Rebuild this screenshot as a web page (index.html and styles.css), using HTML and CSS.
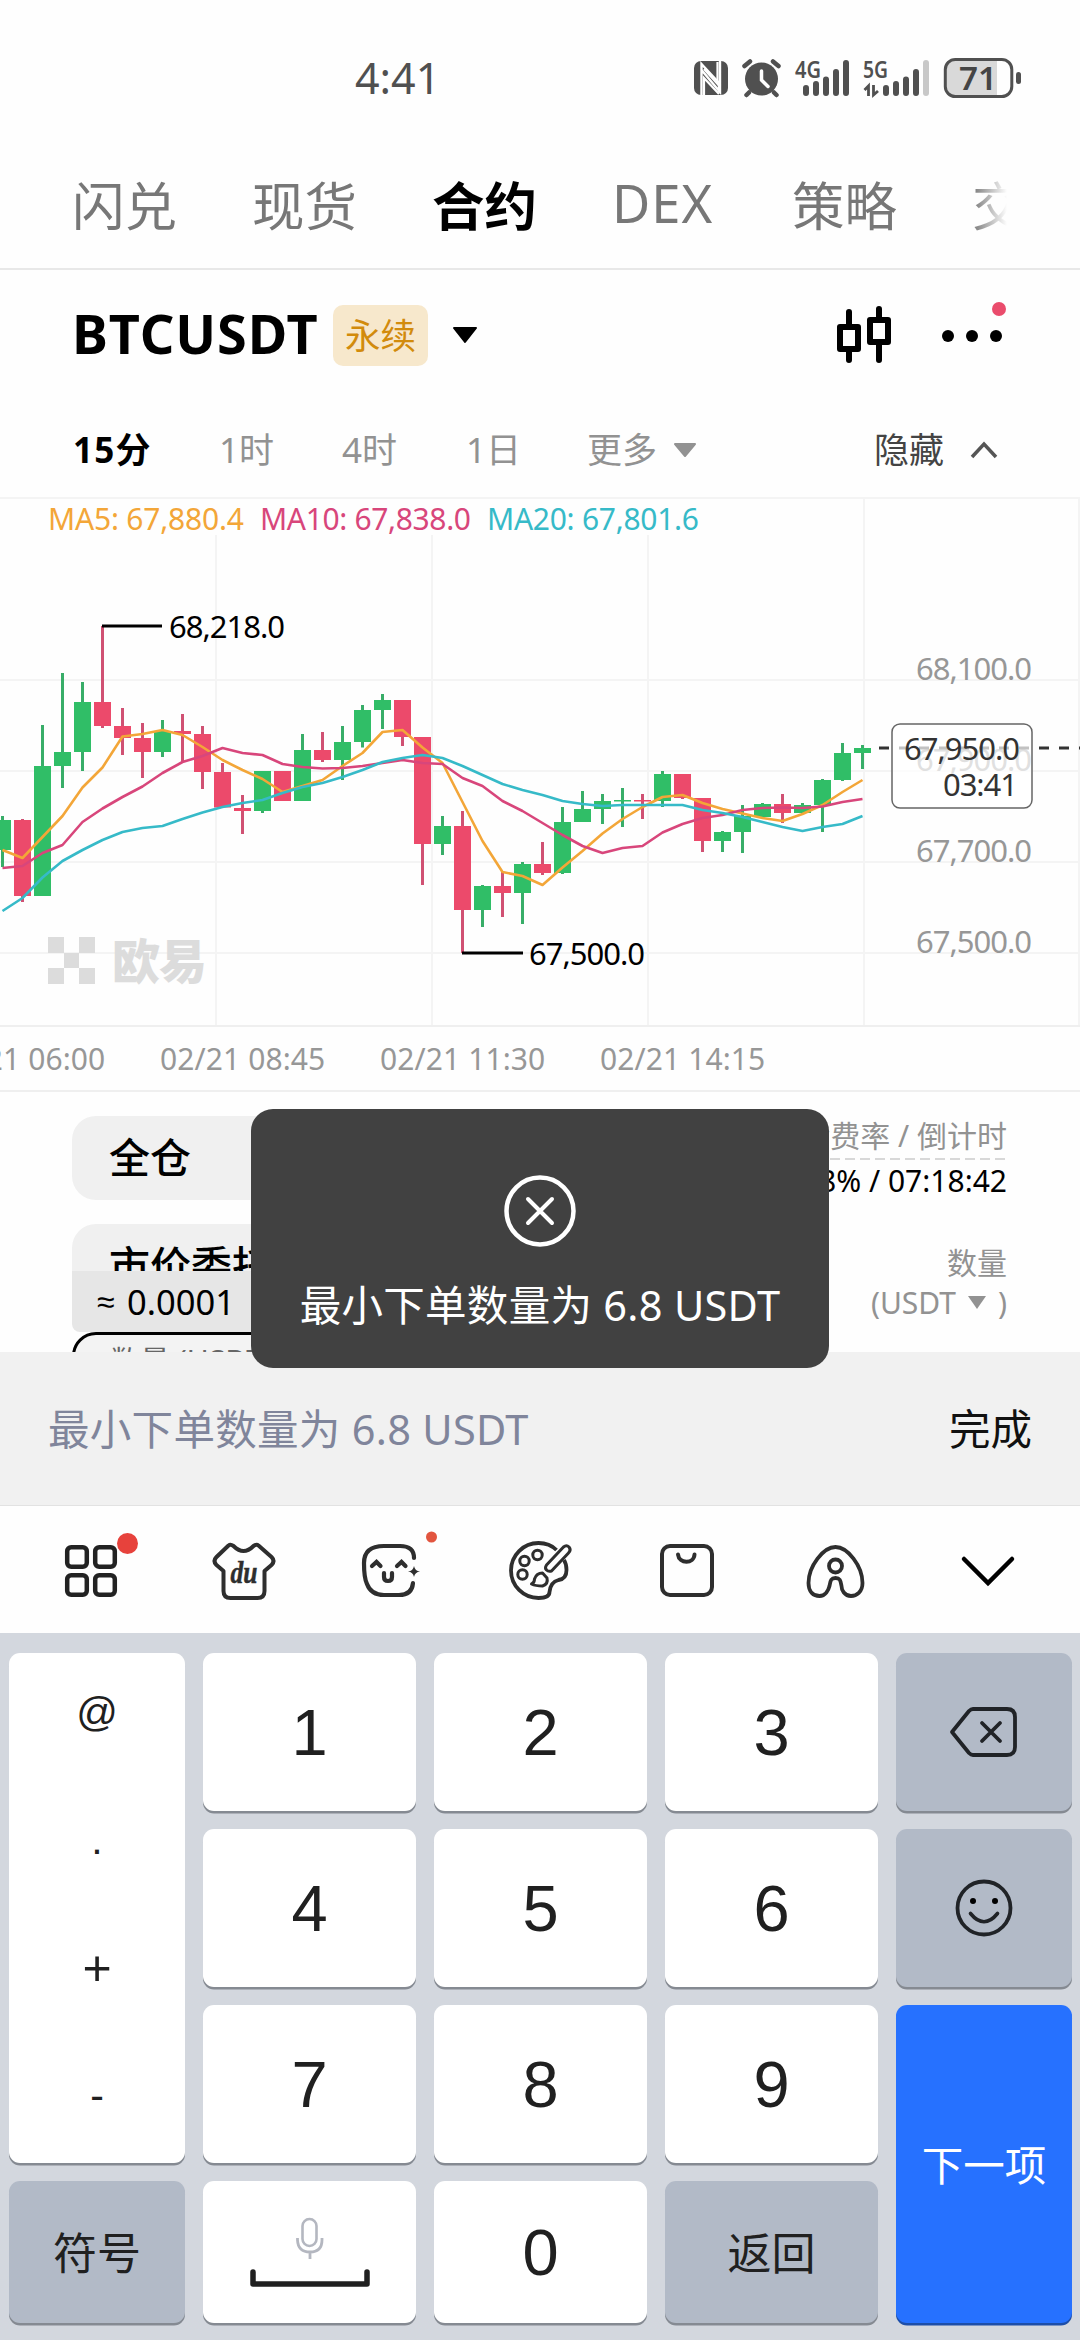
FILE: index.html
```html
<!DOCTYPE html>
<html lang="zh-CN">
<head>
<meta charset="utf-8">
<title>BTCUSDT 永续</title>
<link rel="stylesheet" href="styles.css">
</head>
<body>
<div class="screen">
  <header class="status">
    <span class="clock">4:41</span>
    <svg class="status-icons" viewBox="690 50 340 56" width="340" height="56">
      <rect x="694" y="61" width="34" height="34" rx="7" fill="#505050"/>
      <path d="M701.500 95V64L719 83V92M720 61V92M701.500 70L720 92V61" fill="none" stroke="#fff" stroke-width="2.400"/>
      <path d="M704 69L717.500 84V62M719 94L704 78V95" fill="none" stroke="#fff" stroke-width="2.200"/>
      <circle cx="761.500" cy="79" r="16.500" fill="#505050"/>
      <path d="M744.500 66L750 61.500M778.500 66L773 61.500M749 92.500L746.500 95M774 92.500L776.500 95" stroke="#505050" stroke-width="4.500" stroke-linecap="round"/>
      <path d="M761.500 71V80L768 86.500" fill="none" stroke="#fff" stroke-width="3.500" stroke-linecap="round"/>
      <text class="net" x="795" y="78" textLength="26" lengthAdjust="spacingAndGlyphs">4G</text>
      <path d="M806 88V93M816 84V93M826 79.500V93M836 72V93M846 63V93" stroke="#505050" stroke-width="6" stroke-linecap="round"/>
      <text class="net" x="863" y="78" textLength="25" lengthAdjust="spacingAndGlyphs">5G</text>
      <path d="M864.500 90L868.500 86V96M873.500 85V95L878 91" fill="none" stroke="#505050" stroke-width="2.800"/>
      <path d="M886 88V93M896 84V93M906 79.500V93M916 72V93" stroke="#505050" stroke-width="6" stroke-linecap="round"/>
      <path d="M926 63V93" stroke="#c8c8c8" stroke-width="6" stroke-linecap="round"/>
      <path d="M956 60H997V96H956A10 10 0 0 1 946 86V70A10 10 0 0 1 956 60Z" fill="#d9d9d9"/>
      <rect x="945.300" y="59.500" width="66.500" height="37" rx="10" fill="none" stroke="#505050" stroke-width="3"/>
      <rect x="1016" y="72" width="5" height="12" rx="2.500" fill="#505050"/>
      <text class="pct" x="959" y="90" textLength="38" lengthAdjust="spacingAndGlyphs">71</text>
    </svg>
  </header>

  <nav class="tabs">
    <span>闪兑</span><span>现货</span><span class="on">合约</span><span class="lat">DEX</span><span>策略</span><span class="fade">交</span>
  </nav>

  <section class="pair">
    <h1>BTCUSDT</h1>
    <span class="badge">永续</span>
    <svg class="drop" viewBox="0 0 26 16" width="26" height="16"><path d="M2 1H24L13 15Z" stroke="#000" stroke-width="2" stroke-linejoin="round"/></svg>
    <svg class="tools" viewBox="834 300 174 70" width="174" height="70">
      <path d="M849 312V324M849 352V360M879 309V318M879 344V360" stroke="#000" stroke-width="6" stroke-linecap="round"/>
      <path d="M840 327H858V349H840ZM870 320H888V342H870Z" fill="none" stroke="#000" stroke-width="6" stroke-linejoin="round"/>
      <circle cx="948" cy="336" r="6"/><circle cx="972" cy="336" r="6"/><circle cx="996" cy="336" r="6"/>
      <circle cx="999" cy="309" r="7" fill="#ea4c6c"/>
    </svg>
  </section>

  <section class="periods">
    <span class="p1">15分</span><span class="p2">1时</span><span class="p3">4时</span><span class="p4">1日</span><span class="p5">更多</span>
    <svg viewBox="0 0 24 16" width="24" height="16"><path d="M2 2H22L12 14Z" fill="#929292" stroke="#929292" stroke-width="2" stroke-linejoin="round"/></svg>
    <span class="hide">隐藏</span>
    <svg viewBox="0 0 28 20" width="28" height="20"><path d="M2 17L14 4L26 17" fill="none" stroke="#555" stroke-width="3.500"/></svg>
  </section>

  <svg class="chart" id="chart" viewBox="0 490 1080 535" width="1080" height="535">
    <path d="M0 498H1080M0 680H1080M0 771H1080M0 862H1080M0 953H1080" stroke="#f4f4f4" stroke-width="2"/>
    <path d="M216 535V1025M432 535V1025M648 535V1025M864 498V1025M1079 498V1025" stroke="#f4f4f4" stroke-width="2"/>
    <g fill="#dcdcdc">
      <path d="M48 937H64V953H48ZM79 937H95V953H79ZM64 953H79V968H64ZM48 968H64V984H48ZM79 968H95V984H79Z"/>
      <text class="mark" x="112" y="979" textLength="95">欧易</text>
    </g>
    <g class="axis">
      <text x="916" y="680" textLength="116">68,100.0</text>
      <text x="916" y="771" textLength="116">67,900.0</text>
      <text x="916" y="862" textLength="116">67,700.0</text>
      <text x="916" y="953" textLength="116">67,500.0</text>
    </g>
    <path d="M879 748H1080" stroke="#333" stroke-width="3" stroke-dasharray="10 10"/>
    <g id="candles"></g>
    <g id="averages" fill="none" stroke-width="2.600" stroke-linejoin="round"></g>
    <path d="M102 626H162M462 953H523" stroke="#000" stroke-width="3"/>
    <g class="num">
      <text x="169" y="637.500" textLength="116">68,218.0</text>
      <text x="529" y="964.500" textLength="116">67,500.0</text>
    </g>
    <rect x="892" y="724" width="140" height="84" rx="8" fill="#fff" fill-opacity=".7" stroke="#666" stroke-width="1.500"/>
    <g class="num" fill="#333">
      <text x="904" y="760" textLength="116">67,950.0</text>
      <text x="943" y="796" textLength="75">03:41</text>
    </g>
    <g class="legend">
      <text x="48" y="529.500" textLength="196" fill="#f3a638">MA5: 67,880.4</text>
      <text x="260" y="529.500" textLength="211" fill="#d8467b">MA10: 67,838.0</text>
      <text x="487" y="529.500" textLength="212" fill="#36bac8">MA20: 67,801.6</text>
    </g>
  </svg>

  <div class="dates">
    <span>02/21 06:00</span><span>02/21 08:45</span><span>02/21 11:30</span><span>02/21 14:15</span>
  </div>

  <main class="order">
    <div class="form">
      <div class="field mode">全仓</div>
      <div class="field kind">市价委托</div>
      <div class="approx"><i>≈</i>0.0001</div>
      <div class="amount">数量 (USDT)</div>
    </div>
    <div class="info">
      <div class="rate">资金费率 / 倒计时</div>
      <div class="count">0.0018% / 07:18:42</div>
      <div class="qty">数量</div>
      <div class="unit"><span>(USDT</span><svg viewBox="0 0 20 14" width="20" height="14"><path d="M1 0H19L10 13Z" fill="#929292"/></svg><span>)</span></div>
    </div>
    <div class="toast">
      <svg viewBox="0 0 74 74" width="74" height="74"><circle cx="37" cy="37" r="33.500" fill="none" stroke="#fff" stroke-width="4.500"/><path d="M25 25L49 49M49 25L25 49" stroke="#fff" stroke-width="4" stroke-linecap="round"/></svg>
      <p>最小下单数量为 6.8 USDT</p>
    </div>
  </main>

  <div class="hint"><span>最小下单数量为 6.8 USDT</span><b>完成</b></div>

  <div class="toolbar">
    <svg viewBox="51 1529 80 80"><g fill="none" stroke="#222" stroke-width="4.500"><rect x="67.200" y="1547.200" width="19.600" height="19.600" rx="4"/><rect x="95.200" y="1547.200" width="19.600" height="19.600" rx="4"/><rect x="67.200" y="1575.200" width="19.600" height="19.600" rx="4"/><rect x="95.200" y="1575.200" width="19.600" height="19.600" rx="4"/></g><circle cx="127.500" cy="1543.500" r="10.500" fill="#e7423c"/></svg>
    <svg viewBox="200.500 1529 80 80"><path d="M223 1571L216 1565Q212 1561 216 1557L228 1545.500Q230 1544 233 1546Q243 1556 253 1546Q256 1544 258 1545.500L271 1557Q275 1561 271 1565L264 1571V1591Q264 1598 257 1598H230Q223 1598 223 1591Z" fill="none" stroke="#2e2e2e" stroke-width="4" stroke-linejoin="round"/><text class="du" x="230" y="1583" textLength="27" lengthAdjust="spacingAndGlyphs">du</text></svg>
    <svg viewBox="350 1529 80 80"><g fill="none" stroke="#2e2e2e" stroke-width="4.200" stroke-linecap="round"><path d="M414 1558Q414 1546 400 1546H384Q364 1546 364 1563Q364 1578 367 1584Q371 1595 384 1595H399Q412 1595 413 1583"/><path d="M372 1566L376.500 1562L380.500 1566M397 1566L401.500 1562L405.500 1566M384 1573V1577Q384 1581 388 1581Q392 1581 392 1577V1573"/></g><path d="M414 1566Q415 1571 420 1571.500Q415 1572 414 1577Q413 1572 408 1571.500Q413 1571 414 1566Z" fill="#2e2e2e"/><circle cx="431.500" cy="1537" r="5.500" fill="#e2553f"/></svg>
    <svg viewBox="499.500 1529 80 80"><g fill="none" stroke="#2e2e2e" stroke-width="3.800" stroke-linejoin="round"><path d="M556 1550Q549 1543 538 1543A27.500 27.500 0 0 0 538 1598Q549 1598 549 1592Q550 1582 558 1580Q566 1579 566 1570Q566 1564 563.500 1560"/><circle cx="524" cy="1561" r="4.700" stroke-width="3"/><circle cx="537" cy="1555" r="4.700" stroke-width="3"/><circle cx="522" cy="1574.500" r="4.700" stroke-width="3"/><path d="M531 1584Q534 1583 534 1579Q536 1573 542 1573L546.500 1578Q548 1584 542 1586Q535 1586 531 1584Z" stroke-width="3"/><path d="M546 1565L563 1547Q566 1544.500 568.500 1547Q571 1550 568 1553L551 1571Q548 1572 546 1570Q544 1568 546 1565Z" stroke-width="3"/></g></svg>
    <svg viewBox="649 1529 80 80"><g fill="none" stroke="#2e2e2e" stroke-width="4" stroke-linecap="round"><rect x="662" y="1546" width="50" height="49" rx="8"/><path d="M678 1554.500C679 1564 694 1564 694.500 1554.500"/></g></svg>
    <svg viewBox="798.500 1529 80 80"><g fill="none" stroke="#2e2e2e" stroke-width="3.800"><path d="M835 1547C847 1547 862 1566 862 1583C862 1592 856 1596 850.500 1596C844 1596 841 1590 841 1586C840 1581 840 1578 835 1578C830 1578 830 1581 829 1586C828 1590 825 1596 819 1596C813 1596 808 1592 808 1583C808 1566 823 1547 835 1547Z"/><circle cx="835" cy="1566" r="6.500"/></g></svg>
    <svg viewBox="948 1529 80 80"><path d="M964 1559L988 1583L1012 1559" fill="none" stroke="#000" stroke-width="4.500" stroke-linecap="round"/></svg>
  </div>

  <div class="keyboard">
    <div class="key tall"><span>@</span><span>.</span><span class="op">+</span><span>-</span></div>
    <div class="key">1</div><div class="key">2</div><div class="key">3</div>
    <div class="key grey"><svg viewBox="0 0 70 52" width="70" height="52"><path d="M24 3H58Q66 3 66 11V41Q66 49 58 49H24Q22 49 20 47L3 26L20 5Q22 3 24 3Z M33 17L51 35M51 17L33 35" fill="none" stroke="#202327" stroke-width="3.800" stroke-linejoin="round" stroke-linecap="round"/></svg></div>
    <div class="key">4</div><div class="key">5</div><div class="key">6</div>
    <div class="key grey"><svg viewBox="0 0 60 60" width="60" height="60"><circle cx="30" cy="30" r="26.500" fill="none" stroke="#202327" stroke-width="3.800"/><circle cx="19" cy="23" r="3"/><circle cx="41" cy="23" r="3"/><path d="M16.500 35.500Q30 52 43.500 35.500" fill="none" stroke="#202327" stroke-width="3.600" stroke-linecap="round"/></svg></div>
    <div class="key">7</div><div class="key">8</div><div class="key">9</div>
    <div class="key next">下一项</div>
    <div class="key grey word">符号</div>
    <div class="key space"><svg viewBox="0 0 124 76" width="124" height="76"><rect x="54.500" y="5" width="14" height="27" rx="7" fill="none" stroke="#b4b7c0" stroke-width="2.600"/><path d="M49.500 24V26Q50 38 62 38Q74 38 74 26V24M62 38V45" fill="none" stroke="#b4b7c0" stroke-width="2.800"/><path d="M5 58V70H119V58" fill="none" stroke="#202020" stroke-width="5.500" stroke-linecap="round" stroke-linejoin="round"/></svg></div>
    <div class="key">0</div>
    <div class="key grey word">返回</div>
  </div>
</div>
<script src="chart.js"></script>
</body>
</html>
```

FILE: chart.js
```js
// Each candle: high, body top, body bottom, low, rising?
const candles = [
  [816,820,850,867,1],[819,820,896,902,0],[725,766,896,896,1],[673,752,766,788,1],
  [682,702,752,771,1],[626,702,726,728,0],[708,726,738,755,0],[723,738,752,778,0],
  [720,731,752,757,1],[714,731,734,762,0],[726,734,772,789,0],[763,772,807.5,808,0],
  [795,808,811,834,0],[771,771,811,813,1],[771,771,801,801,0],[734,750,801,801,1],
  [732,750,760,762,0],[726,742,760,780,1],[705,710,742,747.5,1],[694,700,710,729,1],
  [700,700,737,746,0],[737,737,844,885,0],[816,826,844,855,1],[811,826,910,953,0],
  [885,886,910,927,1],[871,886,893,917,0],[862,864,893,924,1],[842,864,873,875,0],
  [807,822,873,874,1],[791,809,822,822,1],[794,801,809,824,1],[788,800,801.5,827,1],
  [794,800,801.5,819,0],[771,774,801,807,1],[774,774,798,799,0],[798,798,841,852,0],
  [831,832,841,852,1],[805,816,832,853,1],[803,804,817,817,1],[794,804,813,823,0],
  [803,805,813,813,1],[779,780,805,832,1],[743,753,780,781,1],[745,748,753,769,1]
];
const averages = [
  ['#f3a638', [850,858,837,816,787.5,767.5,736.5,734,730,735,747,760,770,779,792,786,780,766,753,732,730,747.5,763,802,841,872,876,885,867.5,851,833.5,819,807,797,795,803,809,813.5,818,821,814,805,792,780]],
  ['#d8467b', [868,866,853,845,822,808.5,797,786.5,773,762,756,748,753,755,764,767,768.5,768,766,763,760,763,764,778,786,801,811,823,835,846,853,848,846,832.5,824,818,815,810,808,807.5,808,806.5,802,799]],
  ['#36bac8', [911,898,877.5,861,850,840,832,828,826,819,812.5,807,803,800,793,787,783,777,770,762,758,755,758,766,775,784,790,795,801,804,806,805,805,805,805,810,813,817,822,827,831,827,824,816]]
];
const x = i => 2.5 + 20 * i;
document.getElementById('candles').innerHTML = candles.map(([hi, top, bottom, lo, up], i) => {
  const c = up ? '#30be67' : '#ec4a6b';
  return `<rect x="${x(i) - 1.5}" y="${hi}" width="3" height="${lo - hi}" fill="${up ? '#38ad68' : '#d05173'}"/>` +
    `<rect x="${x(i) - 8.5}" y="${top}" width="17" height="${bottom - top}" fill="${c}"/>`;
}).join('');
document.getElementById('averages').innerHTML = averages.map(([c, ys]) =>
  `<polyline stroke="${c}" points="${ys.map((y, i) => x(i) + ',' + y).join(' ')}"/>`).join('');
```

FILE: styles.css
```css
* { box-sizing: border-box; }
body {
  margin: 0;
  background: #fefefe;
  color: #000;
  font-family: "Noto Sans", "Noto Sans CJK SC", sans-serif;
}
.screen { width: 1080px; height: 2340px; overflow: hidden; display: flex; flex-direction: column; }
.screen > * { flex: none; }
svg { display: block; overflow: visible; }

.status { height: 140px; display: flex; align-items: flex-start; justify-content: space-between; padding: 50px 50px 0 355px; color: #505050; }
.clock { font-size: 43px; line-height: 56px; letter-spacing: 0; }
.net { font-size: 24px; font-weight: 600; fill: #505050; }
.pct { font-size: 33px; font-weight: 600; fill: #454545; }

.tabs { height: 130px; border-bottom: 2px solid #e8e8e8; display: grid; grid-template-columns: repeat(6, 105px); column-gap: 75px; padding: 0 72px; width: 1080px; overflow: hidden; font-family: "Noto Sans CJK SC", sans-serif; font-size: 52.5px; line-height: 126px; color: #777; white-space: nowrap; }
.tabs .on { color: #000; font-weight: 700; }
.tabs .lat { font-family: "Noto Sans", sans-serif; letter-spacing: 1px; }
.tabs .fade { width: 35px; overflow: hidden; background: linear-gradient(90deg, #777, #fefefe); background-clip: text; -webkit-background-clip: text; color: transparent; }

.pair { height: 130px; display: flex; align-items: center; padding-left: 72px; }
.pair h1 { margin: -4px 0 0; width: 249px; font-size: 54px; line-height: 60px; font-weight: 700; letter-spacing: .9px; }
.badge { margin-left: 12px; width: 95px; height: 61px; border-radius: 10px; background: #f7e8cc; color: #d28b0c; font-size: 35.5px; line-height: 60px; text-align: center; }
.drop { margin-left: 24px; }
.tools { margin-left: 356px; }

.periods { height: 90px; display: flex; align-items: center; padding: 9px 73px 0; font-size: 35px; line-height: 50px; color: #929292; white-space: nowrap; }
.p1 { width: 146px; color: #000; font-weight: 700; letter-spacing: 1.2px; }
.p2 { width: 123px; }
.p3 { width: 124px; }
.p4 { width: 121px; }
.p5 { width: 86px; }
.hide { margin: 0 26px 0 177px; color: #444; }

.chart text { font-family: "Noto Sans", "Noto Sans CJK SC", sans-serif; }
.chart .mark { font-family: "Noto Sans CJK SC", sans-serif; font-size: 48px; font-weight: 900; }
.axis { fill: #979797; font-size: 31px; }
.num { font-size: 31px; }
.legend { font-size: 30px; }

.dates { height: 67px; border-top: 2px solid #efefef; border-bottom: 2px solid #efefef; display: flex; gap: 56px; font-size: 30px; line-height: 64px; letter-spacing: .1px; color: #979797; white-space: nowrap; }
.dates span { width: 164px; flex: none; }
.dates span:first-child { margin-left: -60px; }

.order { height: 260px; position: relative; display: flex; justify-content: space-between; padding: 24px 73px 0 72px; }
.form { width: 500px; height: 236px; overflow: hidden; }
.field { height: 84px; border-radius: 24px; background: #f0f0f0; padding-left: 37px; font-size: 41px; line-height: 82px; font-weight: 500; }
.kind { margin-top: 24px; height: 47px; border-radius: 24px 24px 0 0; overflow: hidden; }
.approx { height: 61px; border-radius: 0 0 8px 8px; background: #e6e6e6; padding-left: 25px; font-size: 34.5px; line-height: 62px; color: #000; display: flex; }
.approx i { width: 30px; font-style: normal; font-size: 32px; font-family: "Liberation Sans", sans-serif; }
.amount { height: 60px; border: 3px solid #000; border-radius: 24px; background: #f3f3f3; padding: 8px 0 0 35px; font-size: 30px; line-height: 36px; color: #666; }
.info { width: 260px; display: flex; flex-direction: column; align-items: flex-end; font-size: 30px; line-height: 40px; color: #929292; white-space: nowrap; }
.rate { height: 44px; background: repeating-linear-gradient(90deg, #d8d8d8 0 10px, transparent 10px 15px) bottom / 100% 2px no-repeat; }
.count { color: #000; margin-top: 1px; }
.qty { margin-top: 42px; }
.unit { display: flex; align-items: center; gap: 11px; }
.toast { position: absolute; left: 251px; top: 17px; width: 578px; height: 259px; border-radius: 22px; background: #414141; color: #fff; display: flex; flex-direction: column; align-items: center; padding-top: 65px; z-index: 2; }
.toast p { margin: 27px 0 0; font-size: 41.5px; line-height: 60px; letter-spacing: .3px; white-space: nowrap; }

.hint { height: 153px; background: #f1f1f1; display: flex; align-items: center; justify-content: space-between; padding: 0 48px 4px; font-size: 41.5px; letter-spacing: .3px; color: #80859b; }
.hint b { color: #111; font-weight: 400; letter-spacing: 0; }

.toolbar { height: 128px; border-top: 1px solid #e2e2e2; display: flex; align-items: center; justify-content: space-between; padding: 0 52px 2px 51px; }
.toolbar svg { width: 80px; height: 80px; flex: none; }
.du { font: italic 700 32px "Liberation Serif", serif; fill: #2e2e2e; stroke: #2e2e2e; stroke-width: .5px; }

.keyboard { height: 707px; background: #d3d7de; display: grid; grid-template-columns: 176px 213px 213px 213px 176px; grid-template-rows: 158px 158px 158px 142px; gap: 18px; padding: 20px 9px; }
.key { background: #fff; border-radius: 11px; box-shadow: 0 2.5px 0 #858a92; display: flex; align-items: center; justify-content: center; font-family: "Liberation Sans", "Noto Sans CJK SC", sans-serif; font-size: 65px; color: #202020; }
.tall { grid-row: span 3; flex-direction: column; font-size: 41px; }
.tall span { flex: 1; display: flex; align-items: center; padding-bottom: 8px; }
.tall .op { font-size: 50px; }
.grey { background: #b2bac7; }
.next { grid-row: span 2; background: #2671ff; color: #fff; font-size: 41.5px; box-shadow: 0 2.5px 0 #1d4ea8; }
.word { font-size: 44px; }
.next, .word { padding-bottom: 3px; }
```
